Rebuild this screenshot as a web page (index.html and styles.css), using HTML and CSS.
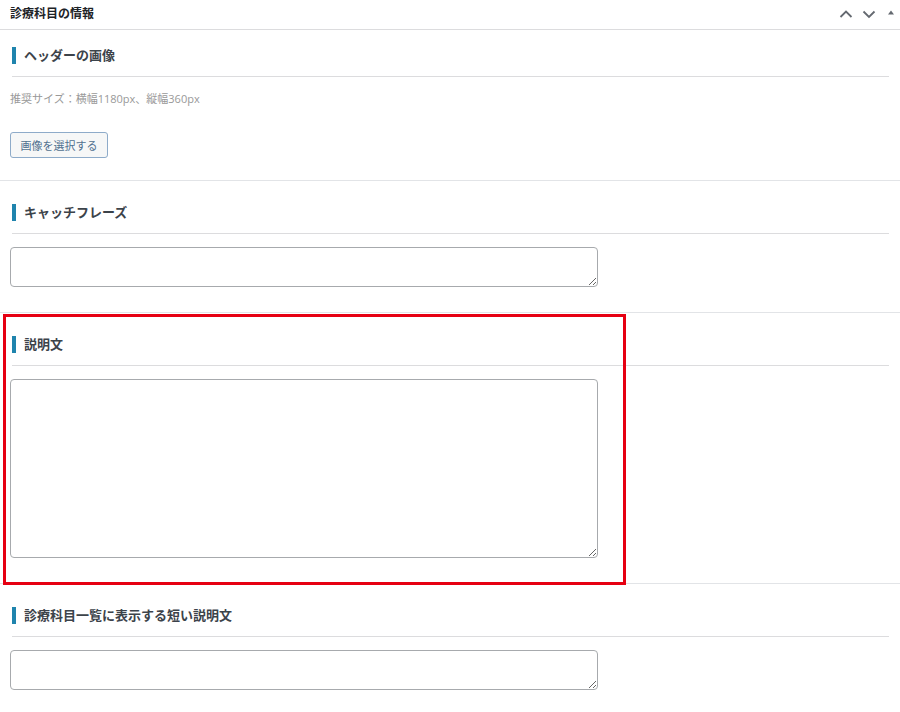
FILE: index.html
```html
<!DOCTYPE html>
<html lang="ja">
<head>
<meta charset="utf-8">
<title>診療科目の情報</title>
<link rel="stylesheet" href="styles.css">
</head>
<body>
<div class="postbox">
  <div class="postbox-header">
    <h2 class="postbox-title">診療科目の情報</h2>
    <div class="handle-actions">
      <svg class="act" width="14" height="10" viewBox="0 0 14 10"><path d="M1.5 8 L7 2.5 L12.5 8" fill="none" stroke="#646970" stroke-width="1.8"/></svg>
      <svg class="act" width="14" height="10" viewBox="0 0 14 10"><path d="M1.5 2.5 L7 8 L12.5 2.5" fill="none" stroke="#646970" stroke-width="1.8"/></svg>
      <svg class="act tri" width="6" height="5" viewBox="0 0 6 5"><path d="M0 4.5 L3 0.5 L6 4.5 Z" fill="#646970"/></svg>
    </div>
  </div>
  <div class="inside">
    <section class="field field-first">
      <div class="field-head"><h3 class="field-title">ヘッダーの画像</h3></div>
      <p class="field-desc">推奨サイズ：横幅1180px、縦幅360px</p>
      <button class="btn" type="button">画像を選択する</button>
    </section>
    <section class="field">
      <div class="field-head"><h3 class="field-title">キャッチフレーズ</h3></div>
      <textarea class="input input-short"></textarea>
    </section>
    <section class="field field-marked">
      <div class="field-head"><h3 class="field-title">説明文</h3></div>
      <textarea class="input input-tall"></textarea>
      <div class="highlight"></div>
    </section>
    <section class="field field-last">
      <div class="field-head"><h3 class="field-title">診療科目一覧に表示する短い説明文</h3></div>
      <textarea class="input input-short"></textarea>
    </section>
  </div>
</div>
</body>
</html>
```

FILE: styles.css
```css
* { box-sizing: border-box; }
html, body {
  margin: 0;
  padding: 0;
  background: #fff;
}
body {
  font-family: "Open Sans", "Noto Sans CJK JP", sans-serif;
  color: #3c434a;
  width: 900px;
  height: 712px;
  overflow: hidden;
}
.postbox-header {
  height: 30px;
  display: flex;
  align-items: center;
  justify-content: space-between;
  border-bottom: 1px solid #dcdcde;
  padding: 0 6px 1px 10px;
}
.postbox-title {
  margin: 0;
  font-size: 12px;
  font-weight: 700;
  color: #1d2327;
  line-height: 18px;
}
.handle-actions {
  display: flex;
  align-items: center;
  gap: 9px;
  margin-top: -1px;
}
.act { display: block; }
.tri { margin-left: 3px; margin-top: -3px; }

.field {
  position: relative;
  padding: 23px 0 25px 10px;
  border-bottom: 1px solid #e2e4e7;
}
.field-first { padding-top: 17px; padding-bottom: 22px; }
.field-marked { padding-top: 23px; padding-bottom: 25px; }
.field-last { border-bottom: 0; }
.field-head {
  margin: 0 11px 0 2px;
  padding-bottom: 12px;
  border-bottom: 1px solid #dcdcde;
}
.field-title {
  margin: 0;
  font-size: 13px;
  font-weight: 700;
  line-height: 17px;
  color: #3c434a;
  border-left: 4px solid #1f84ad;
  padding-left: 8px;
}
.field-desc {
  margin: 13px 0 0;
  font-size: 11px;
  line-height: 18px;
  color: #999;
}
.btn {
  display: block;
  margin-top: 24px;
  height: 26px;
  width: 98px;
  padding: 0;
  font-family: inherit;
  font-size: 11px;
  color: #50708f;
  background: #f6f7f7;
  border: 1px solid #8eabc9;
  border-radius: 3px;
}
.input {
  display: block;
  margin-top: 13px;
  width: 588px;
  border: 1px solid #a7aaad;
  border-radius: 4px;
  background: #fff;
  resize: vertical;
  font-family: inherit;
}
.input-short { height: 40px; }
.input-tall { height: 179px; }
.highlight {
  position: absolute;
  left: 3px;
  top: 1px;
  width: 623px;
  height: 271px;
  border: 3px solid #e60012;
  pointer-events: none;
}
```
